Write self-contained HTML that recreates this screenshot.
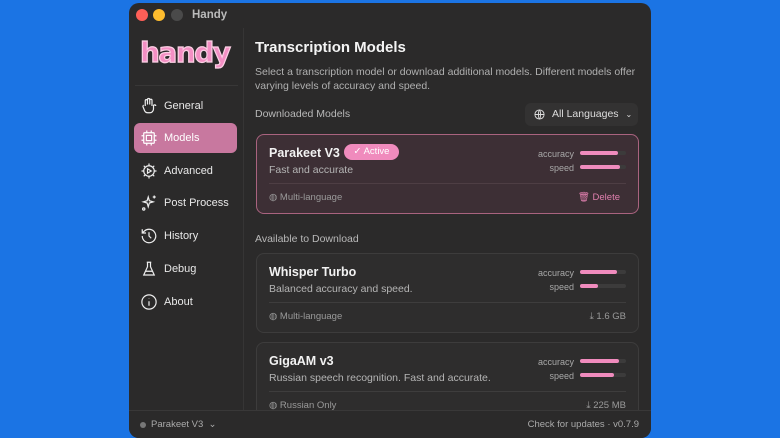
<!DOCTYPE html><html><head><style>
*{margin:0;padding:0;box-sizing:border-box}
body{width:780px;height:438px;background:#1b74e4;font-family:"Liberation Sans",sans-serif;overflow:hidden;position:relative}
.win{position:absolute;left:129px;top:3px;width:522px;height:435px;background:#2b2a2a;border-radius:10px;overflow:hidden;color:#eee}
.a{position:absolute}
.dot{position:absolute;top:6px;width:12px;height:12px;border-radius:50%}
.side{position:absolute;left:0;top:25px;width:115px;height:382px;border-right:1px solid #363535}
.nav{position:absolute;left:5px;width:103px;height:30px;border-radius:6px;font-size:11px;color:#e8e8e8;line-height:30px;padding-left:30px}
.nav svg{position:absolute;left:6px;top:6px}
.card{position:absolute;left:127px;width:383px;height:80px;border:1.5px solid #3d3c3c;border-radius:8px;background:#2e2d2d}
.t{position:absolute;left:12px;top:11px;font-size:12.5px;font-weight:bold;color:#f2f2f2}
.d{position:absolute;left:12px;top:29px;font-size:10.5px;color:#b5b5b5}
.hr{position:absolute;left:12px;right:12px;top:48px;height:1px;background:#3e3d3d}
.lang{position:absolute;left:12px;top:57px;font-size:9.5px;color:#9a9a9a}
.lab{position:absolute;right:64px;font-size:9px;color:#a8a8a8;text-align:right}
.bar{position:absolute;right:12px;width:46px;height:4px;border-radius:2px;background:#3c3b3b}
.bar i{display:block;height:4px;border-radius:2px;background:#f08bbd}
.sz{position:absolute;right:12px;top:57px;font-size:9.5px;color:#9a9a9a}
</style></head><body>
<div class="win">
<div class="dot" style="left:7px;background:#fe5f57"></div>
<div class="dot" style="left:24px;background:#febc2e"></div>
<div class="dot" style="left:42px;background:#4a4a4a"></div>
<div class="a" style="left:63px;top:6px;font-size:11.5px;color:#bbb;font-weight:bold">Handy</div>
<div class="side">
<div class="a" style="left:11px;top:8px;font-size:28px;font-weight:900;color:#f48fc4;letter-spacing:-1.5px;-webkit-text-stroke:1.2px #fbd0e4;font-family:'DejaVu Sans',sans-serif">handy</div>
<div class="a" style="left:6px;top:57px;width:103px;height:1px;background:#383737"></div>
<div class="nav" style="top:63px"><svg width="18" height="18" viewBox="0 0 24 24" fill="none" stroke="#eee" stroke-width="1.6"><path d="M7 12V5a1.5 1.5 0 013 0v5V3.5a1.5 1.5 0 013 0V10V4.5a1.5 1.5 0 013 0V12M5 11a1.5 1.5 0 00-1 2l2 5a5 5 0 005 3h2a5 5 0 005-5v-4a1.5 1.5 0 013 0"/></svg>General</div>
<div class="nav" style="top:95px;background:#c8789f;color:#fff"><svg width="18" height="18" viewBox="0 0 24 24" fill="none" stroke="#fff" stroke-width="1.6"><rect x="5" y="5" width="14" height="14" rx="1"/><rect x="8.5" y="8.5" width="7" height="7"/><path d="M9 2v3M15 2v3M9 19v3M15 19v3M2 9h3M2 15h3M19 9h3M19 15h3"/></svg>Models</div>
<div class="nav" style="top:128px"><svg width="18" height="18" viewBox="0 0 24 24" fill="none" stroke="#eee" stroke-width="1.6"><circle cx="12" cy="12" r="7"/><path d="M12 2v3M12 19v3M2 12h3M19 12h3M5 5l2 2M17 17l2 2M5 19l2-2M17 7l2-2"/><path d="M10 9l5 3-5 3z"/></svg>Advanced</div>
<div class="nav" style="top:160px"><svg width="18" height="18" viewBox="0 0 24 24" fill="none" stroke="#eee" stroke-width="1.6"><path d="M11 4l1.5 5 5 1.5-5 1.5L11 17l-1.5-5-5-1.5 5-1.5z"/><path d="M19 2v4M17 4h4"/><circle cx="5" cy="20" r="1.5"/></svg>Post Process</div>
<div class="nav" style="top:193px"><svg width="18" height="18" viewBox="0 0 24 24" fill="none" stroke="#eee" stroke-width="1.6"><path d="M3 12a9 9 0 103-6.7L3 8M3 3v5h5"/><path d="M12 7v5l3 3"/></svg>History</div>
<div class="nav" style="top:226px"><svg width="18" height="18" viewBox="0 0 24 24" fill="none" stroke="#eee" stroke-width="1.6"><path d="M9 3h6M10 3v6l-5 11h14l-5-11V3M7 15h10"/></svg>Debug</div>
<div class="nav" style="top:259px"><svg width="18" height="18" viewBox="0 0 24 24" fill="none" stroke="#eee" stroke-width="1.6"><circle cx="12" cy="12" r="9.5"/><path d="M12 11v6M12 7.5v.5"/></svg>About</div>
</div>
<div class="a" style="left:126px;top:36px;font-size:15px;font-weight:bold;color:#f4f4f4">Transcription Models</div>
<div class="a" style="left:126px;top:62px;width:390px;font-size:10.5px;line-height:14px;color:#b0b0b0">Select a transcription model or download additional models. Different models offer varying levels of accuracy and speed.</div>
<div class="a" style="left:126px;top:105px;font-size:10.5px;color:#b8b8b8">Downloaded Models</div>
<div class="a" style="left:396px;top:100px;width:113px;height:23px;background:#333232;border-radius:6px;font-size:10.5px;color:#ddd;line-height:23px;padding-left:27px">All Languages <span style="font-size:8px;margin-left:4px">⌄</span><svg class="a" style="left:9px;top:6px" width="11" height="11" viewBox="0 0 24 24" fill="none" stroke="#ddd" stroke-width="2"><circle cx="12" cy="12" r="10"/><path d="M2 12h20M12 2c3 3 3 17 0 20M12 2c-3 3-3 17 0 20"/></svg></div>
<div class="card" style="top:131px;background:#3d2f35;border-color:#a9637f">
<div class="t">Parakeet V3</div>
<div class="a" style="left:87px;top:9px;width:55px;height:16px;border-radius:8px;background:#f08bbd;color:#fff;font-size:9.5px;line-height:16px;text-align:center">✓ Active</div>
<div class="d">Fast and accurate</div>
<div class="lab" style="top:14px">accuracy</div><div class="bar" style="top:16px"><i style="width:38px"></i></div>
<div class="lab" style="top:28px">speed</div><div class="bar" style="top:30px"><i style="width:40px"></i></div>
<div class="hr" style="background:#4e3e44"></div>
<div class="lang">◍ Multi-language</div>
<div class="a" style="right:18px;top:57px;font-size:9.5px;color:#e07fae">🗑 Delete</div>
</div>
<div class="a" style="left:126px;top:230px;font-size:10.5px;color:#b8b8b8">Available to Download</div>
<div class="card" style="top:250px">
<div class="t">Whisper Turbo</div><div class="d">Balanced accuracy and speed.</div>
<div class="lab" style="top:14px">accuracy</div><div class="bar" style="top:16px"><i style="width:37px"></i></div>
<div class="lab" style="top:28px">speed</div><div class="bar" style="top:30px"><i style="width:18px"></i></div>
<div class="hr"></div><div class="lang">◍ Multi-language</div><div class="sz">⤓ 1.6 GB</div>
</div>
<div class="card" style="top:339px">
<div class="t">GigaAM v3</div><div class="d">Russian speech recognition. Fast and accurate.</div>
<div class="lab" style="top:14px">accuracy</div><div class="bar" style="top:16px"><i style="width:39px"></i></div>
<div class="lab" style="top:28px">speed</div><div class="bar" style="top:30px"><i style="width:34px"></i></div>
<div class="hr"></div><div class="lang">◍ Russian Only</div><div class="sz">⤓ 225 MB</div>
</div>
<div class="a" style="left:0;top:407px;width:522px;height:28px;background:#2b2a2a;border-top:1px solid #393838">
<div class="a" style="left:11px;top:11px;width:6px;height:6px;border-radius:50%;background:#777"></div>
<div class="a" style="left:22px;top:8px;font-size:9.5px;color:#aaa">Parakeet V3 &nbsp;⌄</div>
<div class="a" style="right:12px;top:8px;font-size:9.5px;color:#aaa">Check for updates · v0.7.9</div>
</div>
</div>
</body></html>
